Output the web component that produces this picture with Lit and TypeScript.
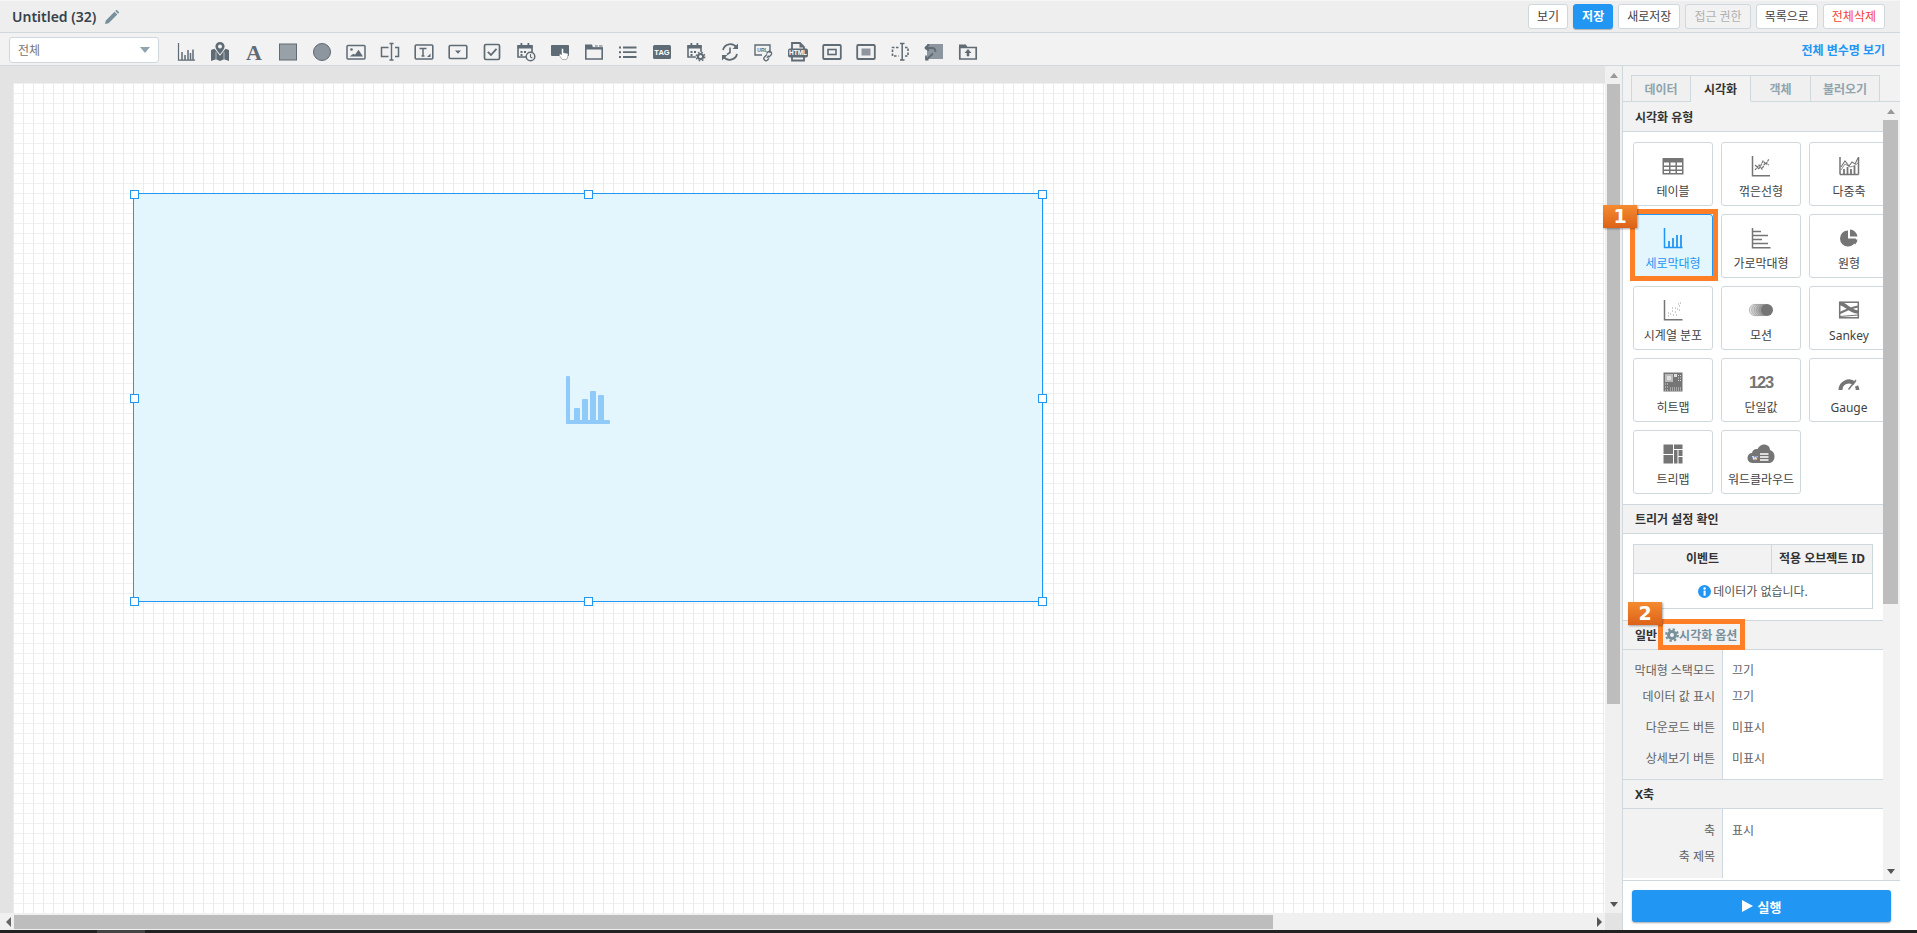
import { LitElement, html, css, svg } from "lit";
import { customElement } from "lit/decorators.js";

const D = "#5f6b75";
const G = "#757575";
const tb = (c: unknown) => html`<svg class="ti" viewBox="0 0 20 20">${c}</svg>`;

const toolIcons = [
  svg`<path d="M2.500 1v17.200H19" fill="none" stroke="${D}" stroke-width="1.200"/><path d="M6 10v8M9 13v5M12 8v10M14.500 11v7M17 7.500v10.500" stroke="${D}" stroke-width="1.500"/>`,
  svg`<path fill-rule="evenodd" fill="${D}" d="M10 0a4.600 4.600 0 0 1 4.600 4.600c0 2.300-2.400 5.200-4.600 7.600-2.200-2.400-4.600-5.300-4.600-7.600A4.600 4.600 0 0 1 10 0zm0 2.600a2 2 0 1 0 0 4 2 2 0 0 0 0-4z"/><path fill="${D}" d="M1 8l3.500-1.200 5.500 7 5.500-7L19 8v11l-5-1.800-4 1.800-4-1.800L1 19z"/><path d="M6 10v7M14 10v7" stroke="#f2f2f2" stroke-width=".6"/>`,
  svg`<text x="10" y="17.500" text-anchor="middle" class="serifA">A</text>`,
  svg`<rect x="1.500" y="2" width="17" height="16" fill="#98a0a8" stroke="${D}" stroke-width="1"/>`,
  svg`<circle cx="10" cy="10" r="8.500" fill="#8d959e" stroke="${D}" stroke-width="1"/>`,
  svg`<rect x="1" y="3.500" width="18" height="13.500" rx="1" fill="none" stroke="${D}" stroke-width="1.500"/><circle cx="5.500" cy="7.500" r="1.300" fill="${D}"/><path d="M3.500 14.500l4-2.800 1.500 1 3.500-5 4.500 6.800z" fill="${D}"/>`,
  svg`<path d="M8.500 5.500H1.500v9h7M15 5.500h3.500v9H15" fill="none" stroke="${D}" stroke-width="1.500"/><path d="M9.500 1.500h4M11.500 1.500v16.500M9.500 18h4" fill="none" stroke="${D}" stroke-width="1.400"/>`,
  svg`<rect x="1.200" y="3" width="17.600" height="14" rx="1" fill="none" stroke="${D}" stroke-width="1.600"/><path d="M5.500 6.500h7M9 6.500v7.500M7.500 14h3" fill="none" stroke="${D}" stroke-width="1.500"/><path d="M16.500 11.500v3.500H13z" fill="${D}"/>`,
  svg`<rect x="1.200" y="3.500" width="17.600" height="13" rx="1" fill="none" stroke="${D}" stroke-width="1.600"/><path d="M7 8.500h6L10 11.800z" fill="${D}"/>`,
  svg`<rect x="2.500" y="2.500" width="15" height="15" rx="1.500" fill="none" stroke="${D}" stroke-width="1.700"/><path d="M5.800 9.800l3.200 3.200 5.500-6.200" fill="none" stroke="${D}" stroke-width="1.800"/>`,
  svg`<path d="M2 4h14v11H2z" fill="none" stroke="${D}" stroke-width="1.600"/><path d="M1.500 3h15v3.500h-15zM4.500 1h1.800v3H4.500zM11.500 1h1.800v3h-1.800z" fill="${D}"/><path d="M4.500 9h2v2h-2zM8 9h2v2H8zM4.500 12h2v2h-2z" fill="${D}"/><circle cx="14.500" cy="14.500" r="4.300" fill="#f2f2f2" stroke="${D}" stroke-width="1.500"/><path d="M14.500 12v3l1.800 1" fill="none" stroke="${D}" stroke-width="1.100"/>`,
  svg`<path d="M2 3h16a1 1 0 0 1 1 1v9a1 1 0 0 1-1 1H2a1 1 0 0 1-1-1V4a1 1 0 0 1 1-1z" fill="${D}"/><path d="M11.500 7.500c0-1.200 2-1.200 2 0v3.200l3.500.6c.8.2 1.200.8 1 1.700l-.6 3.200c-.2.9-.8 1.300-1.500 1.300h-3c-.6 0-1-.3-1.300-.8l-2.200-3.300c-.5-1 .7-1.900 1.500-1.200l.6.6z" fill="#fff" stroke="${D}" stroke-width=".5"/>`,
  svg`<path d="M1.800 6h16.400v11H1.800z" fill="none" stroke="${D}" stroke-width="1.600"/><path d="M1 2.500h7l1 3H19v2H1z" fill="${D}"/><path d="M11 3.500h2.800v1H11zM15 3.500h3.500v1H15z" fill="${D}"/>`,
  svg`<path d="M1 4.500h2v2H1zM1 9.200h2v2H1zM1 14h2v2H1z" fill="${D}"/><path d="M5 5.500h13.500M5 10.200h13.500M5 15h13.500" stroke="${D}" stroke-width="1.800"/>`,
  svg`<rect x="1" y="3" width="18" height="14" rx="1.500" fill="${D}"/><text x="10" y="13" text-anchor="middle" class="tagT">TAG</text>`,
  svg`<path d="M2 4h13v11H2z" fill="none" stroke="${D}" stroke-width="1.600"/><path d="M1.500 3h14v3.500h-14zM4.500 1h1.800v3H4.500zM10.500 1h1.800v3h-1.800z" fill="${D}"/><path d="M4.500 9h2v2h-2zM8 9h2v2H8zM4.500 12h2v2h-2z" fill="${D}"/><circle cx="14.500" cy="14.500" r="4.800" fill="#f2f2f2"/><circle cx="14.500" cy="14.500" r="2.600" fill="none" stroke="${D}" stroke-width="2"/><circle cx="14.500" cy="14.500" r="4.300" fill="none" stroke="${D}" stroke-width="1.300" stroke-dasharray="1.700 1.700"/>`,
  svg`<path d="M3 8a7.500 7.500 0 0 1 13.500-2.500M17 12a7.500 7.500 0 0 1-13.500 2.500" fill="none" stroke="${D}" stroke-width="1.800"/><path d="M18 1.500V7h-5.500zM2 18.500V13h5.500z" fill="${D}"/><path d="M10 5.500V10.500l-3 2" fill="none" stroke="${D}" stroke-width="1.600"/>`,
  svg`<path d="M16 11V3H1v10h7" fill="none" stroke="${D}" stroke-width="1.400"/><text x="8.500" y="9.500" text-anchor="middle" class="urlT">URL</text><path d="M13 12.500l-2.500 2.500a2 2 0 0 0 3 3l1.500-1.500M14.500 15.500l2.500-2.500a2 2 0 0 0-3-3l-1.500 1.500M12.800 15.700l2-2" fill="none" stroke="${D}" stroke-width="1.300"/>`,
  svg`<path d="M4 7V1h8l4 4v2" fill="none" stroke="${D}" stroke-width="1.800"/><path d="M11.500 1v4.500H16z" fill="${D}"/><rect x="0" y="6.500" width="20" height="9" rx="2" fill="${D}"/><text x="10" y="13.300" text-anchor="middle" class="htmlT">HTML</text><path d="M4 15v3.500h12V15" fill="none" stroke="${D}" stroke-width="1.800"/>`,
  svg`<rect x="1.200" y="3" width="17.600" height="14" rx="1" fill="none" stroke="${D}" stroke-width="1.800"/><rect x="6" y="7.500" width="8" height="5" fill="none" stroke="${D}" stroke-width="1.600"/>`,
  svg`<rect x="1.200" y="3" width="17.600" height="14" rx="1" fill="none" stroke="${D}" stroke-width="1.800"/><rect x="5.500" y="6.500" width="9" height="7" fill="#8d959e"/>`,
  svg`<path d="M8.500 5.500H2.500v8.500h6M15 5.500h3v8.500h-3" fill="none" stroke="${D}" stroke-width="1.600" stroke-dasharray="2.500 1.500"/><path d="M10 1.500h4.500M12.200 1.500v16.500M10 18h4.500" fill="none" stroke="${D}" stroke-width="1.500"/>`,
  svg`<path d="M3 2h16v15H3z" fill="#8d959e"/><path d="M1 6l4-3.500M1 6l4 2.500M1 6h7c2.500 0 3.500 1.500 3.500 4M2 18l7-6.500M4.500 17.500H2v-4" fill="none" stroke="${D}" stroke-width="1.800"/>`,
  svg`<path d="M1.800 5.500h16.400V17H1.800z" fill="none" stroke="${D}" stroke-width="1.700"/><path d="M1 2.500h7l1.500 3H1z" fill="${D}"/><path d="M10 7l3.500 4h-2.200v3.200H8.700V11H6.500z" fill="${D}"/>`,
];

const ci = (c: unknown) => html`<svg class="ci" viewBox="0 0 24 24">${c}</svg>`;

type Card = { label: string; icon: unknown; active?: boolean };
const motion = [
  ["6", "#dedede"], ["8.400", "#d0d0d0"], ["10.800", "#c0c0c0"], ["13.200", "#acacac"], ["15.600", "#989898"],
];
const cards: Card[] = [
  { label: "테이블", icon: svg`<path fill-rule="evenodd" fill="${G}" d="M2 4h20a.5.5 0 0 1 .5.5V20a.5.5 0 0 1-.5.5H2a.5.5 0 0 1-.5-.5V4.500A.5.5 0 0 1 2 4zm1 4.500v3h5v-3zm6.500 0v3h5v-3zm6.500 0v3h5v-3zM3 13v2.500h5V13zm6.500 0v2.500h5V13zm6.500 0v2.500h5V13zM3 17v2h5v-2zm6.500 0v2h5v-2zm6.500 0v2h5v-2z"/>` },
  { label: "꺾은선형", icon: svg`<path d="M3.500 2v19.800H21" fill="none" stroke="${G}" stroke-width="1.500"/><path d="M6 16l4-5 3 4 3-6 4 2M6 11l4 4 4-8 3 3 3-5" fill="none" stroke="${G}" stroke-width="1.200" stroke-dasharray="2.500 .6"/>` },
  { label: "다중축", icon: svg`<path d="M3 20.500V3M21.500 3v17.500M3 20.500h18.500" fill="none" stroke="${G}" stroke-width="1.500"/><path d="M7 20v-5M10.500 20v-7M14 20v-5M17.500 20v-8" stroke="${G}" stroke-width="1.800"/><path d="M4 13l4-6 4 5 3-4 3 2 3-6" fill="none" stroke="${G}" stroke-width="1.100"/><path d="M4 16l4-6 5 3 4-1 4-3" fill="none" stroke="${G}" stroke-width=".8"/>` },
  { label: "세로막대형", active: true, icon: svg`<path d="M3.500 2v19.500H21.500" fill="none" stroke="#2196f3" stroke-width="1.500"/><path d="M8 21v-6M12 21v-9M16 21v-12M20 21v-12" stroke="#2196f3" stroke-width="1.800"/>` },
  { label: "가로막대형", icon: svg`<path d="M3.500 2v19.800H21.500" fill="none" stroke="${G}" stroke-width="1.500"/><path d="M4 5.500h8M4 9.500h15M4 13.500h9M4 17.500h15" stroke="${G}" stroke-width="1.700"/>` },
  { label: "원형", icon: svg`<path fill="${G}" d="M11 4.500v8h8A8 8 0 1 1 11 4.500zM13 3.500a8 8 0 0 1 7.500 7h-7.500zM14 13.500h6.500a8 8 0 0 1-2.300 5z"/>` },
  { label: "시계열 분포", icon: svg`<path d="M3.500 2v19.800H21.500" fill="none" stroke="${G}" stroke-width="1.500"/><path d="M7 18h1M9 16h1M12 17h1M11 13h1M14 14h1M16 11h1M14 10h1M18 8h1M19 5h1M17 6h1M15 17h1M7 15h1M11 10h1M18 12h1" stroke="#999" stroke-width="1"/>` },
  { label: "모션", icon: svg`${motion.map(([x, c]) => svg`<circle cx="${x}" cy="12" r="5.700" fill="${c}" stroke="#8a8a8a" stroke-width=".5"/>`)}<circle cx="18" cy="12" r="6" fill="${G}"/>` },
  { label: "Sankey", icon: svg`<rect x="2.700" y="4.200" width="18.600" height="15.600" fill="#fff" stroke="${G}" stroke-width="1.500"/><path d="M3 5.500C9 6 12 13 21 14" fill="none" stroke="${G}" stroke-width="3.500"/><path d="M3 15c6-3 10-5 18-6.500" fill="none" stroke="${G}" stroke-width="2"/><path d="M3 18.500l18-1.500" fill="none" stroke="${G}" stroke-width="1"/>` },
  { label: "히트맵", icon: svg`<rect x="2.500" y="2.500" width="19" height="19" fill="${G}"/><rect x="4" y="4" width="8" height="8" fill="#bbb"/><rect x="6" y="6" width="4" height="4" fill="#e0e0e0"/><rect x="13" y="4" width="3" height="3" fill="#ddd"/><path d="M17 5.500h3M17 8h3M17 10.500h3M4 14h3M4 17h3M4 20h3M9 18h11M9 20h11" stroke="#ddd" stroke-dasharray="1 1"/>` },
  { label: "단일값", icon: svg`<text x="12" y="18" text-anchor="middle" class="num">123</text>` },
  { label: "Gauge", icon: svg`<path d="M3.500 20A8.500 8.500 0 0 1 17.500 13.500" fill="none" stroke="${G}" stroke-width="4"/><path d="M19.500 16a8.500 8.500 0 0 1 1 4" fill="none" stroke="${G}" stroke-width="3.500"/><path d="M11.500 19.500L19 10" stroke="${G}" stroke-width="1.400"/>` },
  { label: "트리맵", icon: svg`<path fill="${G}" d="M2.500 2.500h9.500v9.500H2.500zM13 2.500h8.500v4.500H13zM2.500 13H12v8.500H2.500zM13 8h3.500v13.500H13zM17.500 8h4v6h-4zM17.500 15h4v6.500h-4z"/>` },
  { label: "워드클라우드", icon: svg`<path fill="${G}" d="M3.500 21C0 21-1.500 18-1.500 16c0-3 2-5 4.500-5 .5-3 3-4.500 5.500-4C10 4 13 2 16 2.500c3 .5 5 2.500 5 5.500 3 1 4.500 3.500 4.500 6.500 0 4-2.500 6.500-5.500 6.500z"/><text x="6" y="17.800" text-anchor="middle" class="wT">w</text><path d="M11 12h8.500M11 15h8.500M11 18h8.500" stroke="#fff" stroke-width="1.300"/>` },
];

const generalRows: [string, string, boolean][] = [
  ["막대형 스택모드", "끄기", false],
  ["데이터 값 표시", "끄기", false],
  ["다운로드 버튼", "미표시", true],
  ["상세보기 버튼", "미표시", true],
];
const axisRows: [string, string, boolean][] = [
  ["축", "표시", false],
  ["축 제목", "", false],
];

@customElement("app-root")
export class AppRoot extends LitElement {
  static styles = css`
    :host { display: block; width: 100%; height: 933px; overflow: hidden; background: #fff;
      font-family: "Noto Sans", "Noto Sans CJK KR", sans-serif; font-size: 12px; color: #424242; }
    * { box-sizing: border-box; }
    .app { position: relative; display: flex; flex-direction: column; height: 933px; }
    .content { flex: 1; width: 1900px; display: flex; flex-direction: column; min-height: 0; }
    .taskbar { height: 3px; background: #222; display: flex; padding-left: 97px; }
    .taskbar i { width: 48px; background: #444; }

    .topbar { height: 33px; flex: none; background: #eee; border-top: 1px solid #f6f6f6; border-bottom: 1px solid #cfd8dc;
      display: flex; align-items: center; padding: 0 15px 0 12px; }
    .title { font-size: 14px; font-weight: 600; color: #37424a; line-height: 20px; }
    .pencil { width: 14px; height: 14px; margin-left: 9px; }
    .btns { margin-left: auto; display: flex; gap: 5px; }
    .btn { height: 25px; padding: 0 8px; line-height: 23px; background: #fff; border: 1px solid #cfd8dc; border-radius: 3px; color: #424242; white-space: nowrap; }
    .btn.primary { background: #2196f3; border-color: #2196f3; color: #fff; font-weight: 700; box-shadow: 0 1px 1px rgba(0,0,0,.25); }
    .btn.off { background: #f2f2f2; color: #b0b0b0; }
    .btn.red { color: #f44336; }

    .toolbar { height: 33px; flex: none; background: #f2f2f2; border-bottom: 1px solid #cfd8dc;
      display: flex; align-items: center; padding: 2px 15px 0 9px; }
    .select { width: 150px; height: 26px; background: #fff; border: 1px solid #cfd8dc; border-radius: 3px;
      display: flex; align-items: center; justify-content: space-between; padding: 0 8px; color: #757575; margin-right: 17px; }
    .caret { width: 0; height: 0; border: 5px solid transparent; border-top: 6px solid #90a4ae; border-bottom: 0; }
    .tools { display: flex; gap: 14px; margin-top: 4px; }
    .ti { width: 20px; height: 20px; display: block; overflow: visible; }
    .serifA { font: 700 22px "Liberation Serif", serif; fill: #5f6b75; }
    .tagT { font: 700 7.500px "Liberation Sans", sans-serif; fill: #fff; }
    .urlT { font: 700 5px "Liberation Sans", sans-serif; fill: #5f6b75; }
    .htmlT { font: 700 6.500px "Liberation Sans", sans-serif; fill: #fff; }
    .num { font: 700 16.500px "Liberation Sans", sans-serif; fill: #757575; letter-spacing: -1.200px; }
    .wT { font: 700 8px "Liberation Serif", serif; fill: #fff; }
    .link { margin-left: auto; color: #2196f3; font-weight: 700; }

    .body { flex: 1; display: flex; min-height: 0; }
    .stage { width: 1622px; flex: none; display: grid; grid-template-columns: 1fr 17px; grid-template-rows: 1fr 17px; background: #f0f0f0; }
    .view { background: #e3e3e3; padding: 17px 0 0 13px; min-height: 0; overflow: hidden; }
    .canvas { position: relative; height: 100%; background-color: #fff;
      background-image:
        linear-gradient(90deg, #ebebeb 1px, transparent 1px),
        linear-gradient(#f0f0f0 1px, transparent 1px);
      background-size: 10px 10px; }
    .obj { position: absolute; left: 120px; top: 110px; width: 910px; height: 409px; background: #e3f5fd; border: 1px solid #2196f3;
      display: flex; align-items: center; justify-content: center; }
    .obj svg { width: 44px; height: 48px; display: block; margin-top: 4px; }
    .h { position: absolute; width: 9px; height: 9px; background: #fff; border: 1px solid #2196f3; }
    .h.l { left: -4px; } .h.c { left: calc(50% - 4px); } .h.r { right: -5px; }
    .h.t { top: -4px; } .h.m { top: calc(50% - 4px); } .h.b { bottom: -5px; }

    .vs { display: flex; flex-direction: column; align-items: center; background: #f0f0f0; }
    .up, .down { flex: none; height: 18px; display: flex; align-items: center; justify-content: center; }
    .up::before { content: ""; border: 4.500px solid transparent; border-bottom: 5px solid #999; border-top: 0; }
    .down::before { content: ""; border: 4.500px solid transparent; border-top: 5px solid #555; border-bottom: 0; }
    .stage .vs .thumb { width: 13px; height: 620px; background: #bdbdbd; }
    .stage .vs .rest { flex: 1; }
    .hs { display: flex; align-items: center; background: #f0f0f0; height: 17px; padding-left: 2px; }
    .lft, .rgt { flex: none; width: 12px; height: 100%; display: flex; align-items: center; justify-content: center; }
    .lft::before { content: ""; border: 5px solid transparent; border-right: 5px solid #666; border-left: 0; }
    .rgt::before { content: ""; border: 5px solid transparent; border-left: 5px solid #555; border-right: 0; }
    .hs .thumb { width: 1259px; height: 14px; background: #bdbdbd; margin-top: 1px; }
    .hs .rest { flex: 1; }
    .corner { background: #e3e3e3; }

    .panel { flex: 1; min-width: 0; display: flex; flex-direction: column; border-left: 1px solid #cfd8dc; background: #f2f2f2; }
    .tabs { flex: none; height: 36px; padding: 9px 0 0 8px; display: flex; border-bottom: 1px solid #cfd8dc; }
    .tab { height: 27px; width: 60px; border: 1px solid #cfd8dc; border-left: 0; text-align: center; line-height: 27px; color: #90a4ae; font-weight: 700; background: #f0f0f0; }
    .tab:first-child { border-left: 1px solid #cfd8dc; }
    .tab:last-child { width: 69px; }
    .tab.on { background: #f2f2f2; color: #333; border-bottom: 1px solid #f2f2f2; }
    .scroll { flex: 1; min-height: 0; display: flex; }
    .inner { width: 260px; flex: none; overflow: hidden; background: #fff; }
    .pvs { flex: none; width: 17px; display: flex; flex-direction: column; align-items: center; padding-right: 2px; }
    .pvs .thumb { width: 15px; height: 484px; background: #bdbdbd; }
    .pvs .rest { flex: 1; }
    .sec { height: 30px; background: #f2f2f2; padding: 0 0 0 12px; font-weight: 700; color: #333; white-space: nowrap; display: flex; align-items: center; }
    .sec.line { border-top: 1px solid #cfd8dc; border-bottom: 1px solid #cfd8dc; }
    .sec.first { border-bottom: 1px solid #cfd8dc; padding-top: 1px; }
    .grid { display: grid; grid-template-columns: repeat(3, 80px); grid-auto-rows: 64px; gap: 8px; padding: 10px 0 10px 10px; width: 300px; height: 372px; }
    .card { background: #fff; border: 1px solid #cfd8dc; border-radius: 3px; display: flex; flex-direction: column; align-items: center; padding-top: 11px; color: #424242; white-space: nowrap; }
    .card.active { background: #e3f5fd; border-color: #2196f3; color: #2196f3; }
    .ci { width: 24px; height: 24px; display: block; flex: none; overflow: visible; }
    .card span { line-height: 18px; margin-top: 5px; }
    .tw { padding: 10px 10px 11px; }
    .table { width: 240px; border: 1px solid #cfd8dc; }
    .thead { display: grid; grid-template-columns: 137px 1fr; height: 29px; background: #f2f2f2; border-bottom: 1px solid #cfd8dc; font-weight: 700; text-align: center; line-height: 27px; color: #333; }
    .thead div + div { border-left: 1px solid #cfd8dc; }
    .empty { height: 34px; display: flex; align-items: center; justify-content: center; gap: 2px; color: #555; }
    .empty svg { width: 13px; height: 13px; }
    .gear { width: 14px; height: 14px; margin-left: 8px; }
    .opt { color: #78909c; }
    .rows { display: grid; grid-template-columns: 100px 1fr; }
    .lab { background: #f2f2f2; border-right: 1px solid #cfd8dc; text-align: right; padding-right: 7px; height: 26px; line-height: 26px; color: #616161; white-space: nowrap; }
    .val { height: 26px; line-height: 26px; padding-left: 9px; color: #616161; }
    .lab.t, .val.t { height: 31px; padding-top: 5px; }
    .pad { height: 8px; }
    .pad.s { height: 7px; }
    .pad.l { height: 9px; }
    .lab.pad { padding: 0; }
    .run { flex: none; height: 50px; border-top: 1px solid #cfd8dc; background: #fff; padding: 9px 9px 8px; }
    .run div { height: 32px; background: #2196f3; border-radius: 3px; color: #fff; font-weight: 700; font-size: 13px; display: flex; align-items: center; justify-content: center; gap: 5px; box-shadow: 0 1px 2px rgba(0,0,0,.35); }
    .run svg { width: 11px; height: 12px; }

    .mark { position: absolute; border: 5px solid #ff7f27; pointer-events: none; }
    .m1 { left: 1630px; top: 209px; width: 88px; height: 72px; }
    .m2 { left: 1658px; top: 619px; width: 87px; height: 31px; }
    .badge { position: absolute; width: 34px; height: 23px; background: linear-gradient(#f58b30, #dc6218); color: #fff; font: 700 19px/23px "DejaVu Sans", sans-serif; text-align: center; box-shadow: 1px 1px 2px rgba(0,0,0,.35); }
    .b1 { left: 1603px; top: 205px; }
    .b2 { left: 1628px; top: 602px; }
  `;

  private rows(list: [string, string, boolean][], top: string, bottom: string) {
    return html`<div class="rows">
      <div class="lab pad ${top}"></div><div class="pad ${top}"></div>
      ${list.map(([l, v, t]) => html`<div class="lab ${t ? "t" : ""}">${l}</div><div class="val ${t ? "t" : ""}">${v}</div>`)}
      <div class="lab pad ${bottom}"></div><div class="pad ${bottom}"></div>
    </div>`;
  }

  render() {
    return html`<div class="app">
      <div class="content">
        <header class="topbar">
          <span class="title">Untitled (32)</span>
          <svg class="pencil" viewBox="0 0 14 14"><path fill="#78909c" d="M0 14l.8-3.600L9.500 1.700l2.800 2.800-8.700 8.700zM10.300.9l.7-.7c.3-.3.8-.3 1.100 0l1.700 1.700c.3.3.3.8 0 1.100l-.7.700z"/></svg>
          <div class="btns">
            <div class="btn">보기</div>
            <div class="btn primary">저장</div>
            <div class="btn">새로저장</div>
            <div class="btn off">접근 권한</div>
            <div class="btn">목록으로</div>
            <div class="btn red">전체삭제</div>
          </div>
        </header>
        <div class="toolbar">
          <div class="select"><span>전체</span><i class="caret"></i></div>
          <div class="tools">${toolIcons.map(tb)}</div>
          <div class="link">전체 변수명 보기</div>
        </div>
        <div class="body">
          <div class="stage">
            <div class="view">
              <div class="canvas">
                <div class="obj">
                  <svg viewBox="0 0 44 48" fill="#90caf9">
                    <rect width="4" height="48" rx="1"/><rect y="44" width="44" height="4" rx="1"/>
                    <rect x="8" y="32" width="6" height="13" rx="1"/><rect x="16" y="23" width="6" height="22" rx="1"/>
                    <rect x="24" y="15" width="6" height="30" rx="1"/><rect x="32" y="19" width="6" height="26" rx="1"/>
                  </svg>
                  ${["l t", "c t", "r t", "l m", "r m", "l b", "c b", "r b"].map((p) => html`<i class="h ${p}"></i>`)}
                </div>
              </div>
            </div>
            <div class="vs"><div class="up"></div><div class="thumb"></div><div class="rest"></div><div class="down"></div></div>
            <div class="hs"><div class="lft"></div><div class="thumb"></div><div class="rest"></div><div class="rgt"></div></div>
            <div class="corner"></div>
          </div>
          <aside class="panel">
            <div class="tabs">
              <div class="tab">데이터</div><div class="tab on">시각화</div><div class="tab">객체</div><div class="tab">불러오기</div>
            </div>
            <div class="scroll">
              <div class="inner">
                <div class="sec first">시각화 유형</div>
                <div class="grid">
                  ${cards.map((c) => html`<div class="card ${c.active ? "active" : ""}">${ci(c.icon)}<span>${c.label}</span></div>`)}
                </div>
                <div class="sec line">트리거 설정 확인</div>
                <div class="tw">
                  <div class="table">
                    <div class="thead"><div>이벤트</div><div>적용 오브젝트 ID</div></div>
                    <div class="empty">
                      <svg viewBox="0 0 14 14"><circle cx="7" cy="7" r="7" fill="#2196f3"/><rect x="6" y="6" width="2.200" height="5.500" fill="#fff"/><circle cx="7.100" cy="3.800" r="1.300" fill="#fff"/></svg>
                      <span>데이터가 없습니다.</span>
                    </div>
                  </div>
                </div>
                <div class="sec line">일반
                  <svg class="gear" viewBox="0 0 14 14"><circle cx="7" cy="7" r="3.500" fill="none" stroke="#78909c" stroke-width="3"/><circle cx="7" cy="7" r="5.800" fill="none" stroke="#78909c" stroke-width="2.200" stroke-dasharray="2.300 2.250"/></svg>
                  <span class="opt">시각화 옵션</span>
                </div>
                ${this.rows(generalRows, "", "s")}
                <div class="sec line">X축</div>
                ${this.rows(axisRows, "l", "")}
              </div>
              <div class="pvs"><div class="up"></div><div class="thumb"></div><div class="rest"></div><div class="down"></div></div>
            </div>
            <div class="run"><div><svg viewBox="0 0 11 12"><path d="M0 0l11 6-11 6z" fill="#fff"/></svg><span>실행</span></div></div>
          </aside>
        </div>
      </div>
      <div class="taskbar"><i></i></div>
      <div class="mark m1"></div>
      <div class="badge b1">1</div>
      <div class="mark m2"></div>
      <div class="badge b2">2</div>
    </div>`;
  }
}
